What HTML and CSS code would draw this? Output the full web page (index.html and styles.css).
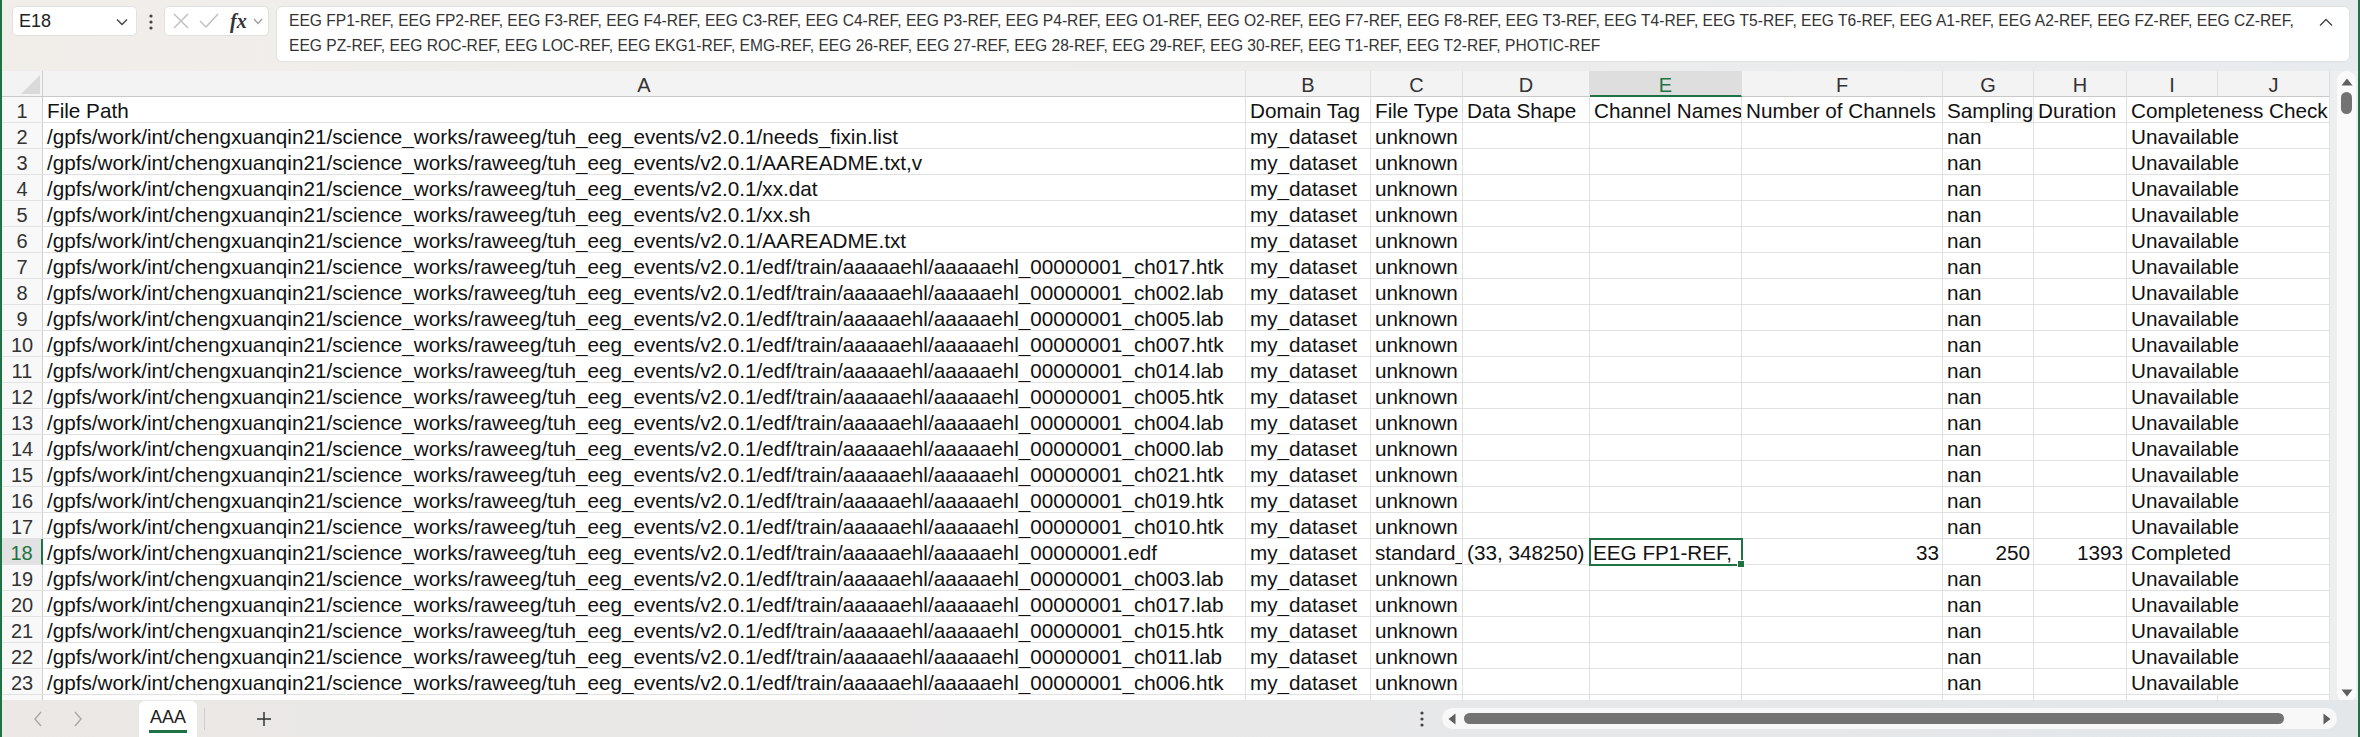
FILE: index.html
```html
<!DOCTYPE html>
<html>
<head>
<meta charset="utf-8">
<link rel="stylesheet" href="styles.css">
</head>
<body>
<div class="app">
  <div class="toolbar">
    <div class="namebox"><span>E18</span><svg class="chev" width="12" height="8" viewBox="0 0 12 8"><path d="M1 1.5 L6 6.5 L11 1.5" fill="none" stroke="#444" stroke-width="1.4"/></svg></div>
    <svg class="kebab" width="4" height="16" viewBox="0 0 4 16"><circle cx="2" cy="2" r="1.6" fill="#444"/><circle cx="2" cy="8" r="1.6" fill="#444"/><circle cx="2" cy="14" r="1.6" fill="#444"/></svg>
    <div class="fxbox">
      <svg width="18" height="18" viewBox="0 0 18 18"><path d="M2 2 L16 16 M16 2 L2 16" stroke="#bdbdbd" stroke-width="1.4"/></svg>
      <svg width="20" height="16" viewBox="0 0 20 16"><path d="M1 8 L7 14 L19 1" fill="none" stroke="#bdbdbd" stroke-width="1.4"/></svg>
      <span class="fx">fx</span>
      <svg class="fxchev" width="10" height="7" viewBox="0 0 10 7"><path d="M1 1 L5 5.5 L9 1" fill="none" stroke="#9a9a9a" stroke-width="1.2"/></svg>
    </div>
    <div class="formula">
      <div class="ftext">EEG FP1-REF, EEG FP2-REF, EEG F3-REF, EEG F4-REF, EEG C3-REF, EEG C4-REF, EEG P3-REF, EEG P4-REF, EEG O1-REF, EEG O2-REF, EEG F7-REF, EEG F8-REF, EEG T3-REF, EEG T4-REF, EEG T5-REF, EEG T6-REF, EEG A1-REF, EEG A2-REF, EEG FZ-REF, EEG CZ-REF,<br>EEG PZ-REF, EEG ROC-REF, EEG LOC-REF, EEG EKG1-REF, EMG-REF, EEG 26-REF, EEG 27-REF, EEG 28-REF, EEG 29-REF, EEG 30-REF, EEG T1-REF, EEG T2-REF, PHOTIC-REF</div>
      <svg class="upchev" width="14" height="9" viewBox="0 0 14 9"><path d="M1 7.5 L7 1.5 L13 7.5" fill="none" stroke="#444" stroke-width="1.4"/></svg>
    </div>
  </div>

  <div class="main">
    <div class="grid">
      <div class="corner"><svg width="19" height="19" viewBox="0 0 19 19"><path d="M19 0 L19 19 L0 19 Z" fill="#dadada"/></svg></div>
      <div class="ch">A</div><div class="ch">B</div><div class="ch">C</div><div class="ch">D</div><div class="ch sel">E</div><div class="ch">F</div><div class="ch">G</div><div class="ch">H</div><div class="ch">I</div><div class="ch">J</div>

      <div class="rh">1</div><div class="c">File Path</div><div class="c">Domain Tag</div><div class="c">File Type</div><div class="c">Data Shape</div><div class="c">Channel Names</div><div class="c">Number of Channels</div><div class="c">Sampling</div><div class="c">Duration</div><div class="c ov">Completeness Check</div><div class="c"></div>

      <div class="rh">2</div><div class="c">/gpfs/work/int/chengxuanqin21/science_works/raweeg/tuh_eeg_events/v2.0.1/needs_fixin.list</div><div class="c">my_dataset</div><div class="c">unknown</div><div class="c"></div><div class="c"></div><div class="c"></div><div class="c">nan</div><div class="c"></div><div class="c ov">Unavailable</div><div class="c"></div>
      <div class="rh">3</div><div class="c">/gpfs/work/int/chengxuanqin21/science_works/raweeg/tuh_eeg_events/v2.0.1/AAREADME.txt,v</div><div class="c">my_dataset</div><div class="c">unknown</div><div class="c"></div><div class="c"></div><div class="c"></div><div class="c">nan</div><div class="c"></div><div class="c ov">Unavailable</div><div class="c"></div>
      <div class="rh">4</div><div class="c">/gpfs/work/int/chengxuanqin21/science_works/raweeg/tuh_eeg_events/v2.0.1/xx.dat</div><div class="c">my_dataset</div><div class="c">unknown</div><div class="c"></div><div class="c"></div><div class="c"></div><div class="c">nan</div><div class="c"></div><div class="c ov">Unavailable</div><div class="c"></div>
      <div class="rh">5</div><div class="c">/gpfs/work/int/chengxuanqin21/science_works/raweeg/tuh_eeg_events/v2.0.1/xx.sh</div><div class="c">my_dataset</div><div class="c">unknown</div><div class="c"></div><div class="c"></div><div class="c"></div><div class="c">nan</div><div class="c"></div><div class="c ov">Unavailable</div><div class="c"></div>
      <div class="rh">6</div><div class="c">/gpfs/work/int/chengxuanqin21/science_works/raweeg/tuh_eeg_events/v2.0.1/AAREADME.txt</div><div class="c">my_dataset</div><div class="c">unknown</div><div class="c"></div><div class="c"></div><div class="c"></div><div class="c">nan</div><div class="c"></div><div class="c ov">Unavailable</div><div class="c"></div>
      <div class="rh">7</div><div class="c">/gpfs/work/int/chengxuanqin21/science_works/raweeg/tuh_eeg_events/v2.0.1/edf/train/aaaaaehl/aaaaaehl_00000001_ch017.htk</div><div class="c">my_dataset</div><div class="c">unknown</div><div class="c"></div><div class="c"></div><div class="c"></div><div class="c">nan</div><div class="c"></div><div class="c ov">Unavailable</div><div class="c"></div>
      <div class="rh">8</div><div class="c">/gpfs/work/int/chengxuanqin21/science_works/raweeg/tuh_eeg_events/v2.0.1/edf/train/aaaaaehl/aaaaaehl_00000001_ch002.lab</div><div class="c">my_dataset</div><div class="c">unknown</div><div class="c"></div><div class="c"></div><div class="c"></div><div class="c">nan</div><div class="c"></div><div class="c ov">Unavailable</div><div class="c"></div>
      <div class="rh">9</div><div class="c">/gpfs/work/int/chengxuanqin21/science_works/raweeg/tuh_eeg_events/v2.0.1/edf/train/aaaaaehl/aaaaaehl_00000001_ch005.lab</div><div class="c">my_dataset</div><div class="c">unknown</div><div class="c"></div><div class="c"></div><div class="c"></div><div class="c">nan</div><div class="c"></div><div class="c ov">Unavailable</div><div class="c"></div>
      <div class="rh">10</div><div class="c">/gpfs/work/int/chengxuanqin21/science_works/raweeg/tuh_eeg_events/v2.0.1/edf/train/aaaaaehl/aaaaaehl_00000001_ch007.htk</div><div class="c">my_dataset</div><div class="c">unknown</div><div class="c"></div><div class="c"></div><div class="c"></div><div class="c">nan</div><div class="c"></div><div class="c ov">Unavailable</div><div class="c"></div>
      <div class="rh">11</div><div class="c">/gpfs/work/int/chengxuanqin21/science_works/raweeg/tuh_eeg_events/v2.0.1/edf/train/aaaaaehl/aaaaaehl_00000001_ch014.lab</div><div class="c">my_dataset</div><div class="c">unknown</div><div class="c"></div><div class="c"></div><div class="c"></div><div class="c">nan</div><div class="c"></div><div class="c ov">Unavailable</div><div class="c"></div>
      <div class="rh">12</div><div class="c">/gpfs/work/int/chengxuanqin21/science_works/raweeg/tuh_eeg_events/v2.0.1/edf/train/aaaaaehl/aaaaaehl_00000001_ch005.htk</div><div class="c">my_dataset</div><div class="c">unknown</div><div class="c"></div><div class="c"></div><div class="c"></div><div class="c">nan</div><div class="c"></div><div class="c ov">Unavailable</div><div class="c"></div>
      <div class="rh">13</div><div class="c">/gpfs/work/int/chengxuanqin21/science_works/raweeg/tuh_eeg_events/v2.0.1/edf/train/aaaaaehl/aaaaaehl_00000001_ch004.lab</div><div class="c">my_dataset</div><div class="c">unknown</div><div class="c"></div><div class="c"></div><div class="c"></div><div class="c">nan</div><div class="c"></div><div class="c ov">Unavailable</div><div class="c"></div>
      <div class="rh">14</div><div class="c">/gpfs/work/int/chengxuanqin21/science_works/raweeg/tuh_eeg_events/v2.0.1/edf/train/aaaaaehl/aaaaaehl_00000001_ch000.lab</div><div class="c">my_dataset</div><div class="c">unknown</div><div class="c"></div><div class="c"></div><div class="c"></div><div class="c">nan</div><div class="c"></div><div class="c ov">Unavailable</div><div class="c"></div>
      <div class="rh">15</div><div class="c">/gpfs/work/int/chengxuanqin21/science_works/raweeg/tuh_eeg_events/v2.0.1/edf/train/aaaaaehl/aaaaaehl_00000001_ch021.htk</div><div class="c">my_dataset</div><div class="c">unknown</div><div class="c"></div><div class="c"></div><div class="c"></div><div class="c">nan</div><div class="c"></div><div class="c ov">Unavailable</div><div class="c"></div>
      <div class="rh">16</div><div class="c">/gpfs/work/int/chengxuanqin21/science_works/raweeg/tuh_eeg_events/v2.0.1/edf/train/aaaaaehl/aaaaaehl_00000001_ch019.htk</div><div class="c">my_dataset</div><div class="c">unknown</div><div class="c"></div><div class="c"></div><div class="c"></div><div class="c">nan</div><div class="c"></div><div class="c ov">Unavailable</div><div class="c"></div>
      <div class="rh">17</div><div class="c">/gpfs/work/int/chengxuanqin21/science_works/raweeg/tuh_eeg_events/v2.0.1/edf/train/aaaaaehl/aaaaaehl_00000001_ch010.htk</div><div class="c">my_dataset</div><div class="c">unknown</div><div class="c"></div><div class="c"></div><div class="c"></div><div class="c">nan</div><div class="c"></div><div class="c ov">Unavailable</div><div class="c"></div>
      <div class="rh rsel">18</div><div class="c">/gpfs/work/int/chengxuanqin21/science_works/raweeg/tuh_eeg_events/v2.0.1/edf/train/aaaaaehl/aaaaaehl_00000001.edf</div><div class="c">my_dataset</div><div class="c">standard_edf</div><div class="c">(33, 348250)</div><div class="c active"><span class="clip">EEG FP1-REF, EEG FP2-REF</span><span class="handle"></span></div><div class="c r">33</div><div class="c r">250</div><div class="c r">1393</div><div class="c ov">Completed</div><div class="c"></div>
      <div class="rh">19</div><div class="c">/gpfs/work/int/chengxuanqin21/science_works/raweeg/tuh_eeg_events/v2.0.1/edf/train/aaaaaehl/aaaaaehl_00000001_ch003.lab</div><div class="c">my_dataset</div><div class="c">unknown</div><div class="c"></div><div class="c"></div><div class="c"></div><div class="c">nan</div><div class="c"></div><div class="c ov">Unavailable</div><div class="c"></div>
      <div class="rh">20</div><div class="c">/gpfs/work/int/chengxuanqin21/science_works/raweeg/tuh_eeg_events/v2.0.1/edf/train/aaaaaehl/aaaaaehl_00000001_ch017.lab</div><div class="c">my_dataset</div><div class="c">unknown</div><div class="c"></div><div class="c"></div><div class="c"></div><div class="c">nan</div><div class="c"></div><div class="c ov">Unavailable</div><div class="c"></div>
      <div class="rh">21</div><div class="c">/gpfs/work/int/chengxuanqin21/science_works/raweeg/tuh_eeg_events/v2.0.1/edf/train/aaaaaehl/aaaaaehl_00000001_ch015.htk</div><div class="c">my_dataset</div><div class="c">unknown</div><div class="c"></div><div class="c"></div><div class="c"></div><div class="c">nan</div><div class="c"></div><div class="c ov">Unavailable</div><div class="c"></div>
      <div class="rh">22</div><div class="c">/gpfs/work/int/chengxuanqin21/science_works/raweeg/tuh_eeg_events/v2.0.1/edf/train/aaaaaehl/aaaaaehl_00000001_ch011.lab</div><div class="c">my_dataset</div><div class="c">unknown</div><div class="c"></div><div class="c"></div><div class="c"></div><div class="c">nan</div><div class="c"></div><div class="c ov">Unavailable</div><div class="c"></div>
      <div class="rh">23</div><div class="c">/gpfs/work/int/chengxuanqin21/science_works/raweeg/tuh_eeg_events/v2.0.1/edf/train/aaaaaehl/aaaaaehl_00000001_ch006.htk</div><div class="c">my_dataset</div><div class="c">unknown</div><div class="c"></div><div class="c"></div><div class="c"></div><div class="c">nan</div><div class="c"></div><div class="c ov">Unavailable</div><div class="c"></div>
      <div class="rh"></div><div class="c"></div><div class="c"></div><div class="c"></div><div class="c"></div><div class="c"></div><div class="c"></div><div class="c"></div><div class="c"></div><div class="c"></div><div class="c"></div>
    </div>
    <div class="vscroll">
      <div class="vtrack">
        <svg width="12" height="8" viewBox="0 0 12 8"><path d="M6 0.5 L11.5 7.5 L0.5 7.5 Z" fill="#5f5f5f"/></svg>
        <div class="vthumb"></div>
        <div class="vspace"></div>
        <svg width="12" height="8" viewBox="0 0 12 8"><path d="M0.5 0.5 L11.5 0.5 L6 7.5 Z" fill="#5f5f5f"/></svg>
      </div>
    </div>
  </div>

  <div class="bottombar">
    <svg class="nav prev" width="10" height="16" viewBox="0 0 10 16"><path d="M8 1 L2 8 L8 15" fill="none" stroke="#a8a8a8" stroke-width="1.4"/></svg>
    <svg class="nav next" width="10" height="16" viewBox="0 0 10 16"><path d="M2 1 L8 8 L2 15" fill="none" stroke="#a8a8a8" stroke-width="1.4"/></svg>
    <div class="tab"><span>AAA</span></div>
    <div class="tabsep"></div>
    <svg class="add" width="16" height="16" viewBox="0 0 16 16"><path d="M8 1 V15 M1 8 H15" stroke="#333" stroke-width="1.5"/></svg>
    <div class="spacer"></div>
    <svg class="bdots" width="4" height="16" viewBox="0 0 4 16"><circle cx="2" cy="2" r="1.6" fill="#444"/><circle cx="2" cy="8" r="1.6" fill="#444"/><circle cx="2" cy="14" r="1.6" fill="#444"/></svg>
    <div class="htrack">
      <svg width="8" height="12" viewBox="0 0 8 12"><path d="M7.5 0.5 L7.5 11.5 L0.5 6 Z" fill="#5f5f5f"/></svg>
      <div class="hthumb"></div>
      <svg width="8" height="12" viewBox="0 0 8 12"><path d="M0.5 0.5 L0.5 11.5 L7.5 6 Z" fill="#5f5f5f"/></svg>
    </div>
  </div>
</div>
</body>
</html>
```
FILE: styles.css
```css
html, body {
  margin: 0;
  padding: 0;
}
body {
  width: 2360px;
  height: 737px;
  overflow: hidden;
  font-family: "Liberation Sans", Arial, sans-serif;
}
.app {
  width: 2360px;
  height: 737px;
  box-sizing: border-box;
  border-left: 2px solid #1f7244;
  border-right: 2px solid #1f7244;
  display: flex;
  flex-direction: column;
  background: #fff;
}

/* ---------- formula bar ---------- */
.toolbar {
  height: 71px;
  flex: none;
  display: flex;
  align-items: flex-start;
  padding-top: 6px;
  box-sizing: border-box;
  background: linear-gradient(90deg, #f1eeea 0%, #eeedeb 45%, #e8ebee 100%);
}
.namebox {
  flex: none;
  margin-left: 10px;
  width: 125px;
  height: 30px;
  box-sizing: border-box;
  background: #fff;
  border: 1px solid #e1e1e1;
  border-radius: 5px;
  display: flex;
  align-items: center;
  justify-content: space-between;
  padding: 0 8px 0 6px;
  font-size: 18px;
  color: #222;
}
.namebox .chev { margin-top: 2px; }
.kebab {
  flex: none;
  margin-left: 12px;
  margin-top: 8px;
}
.fxbox {
  flex: none;
  margin-left: 11px;
  width: 105px;
  height: 30px;
  box-sizing: border-box;
  background: #fff;
  border: 1px solid #e1e1e1;
  border-radius: 5px;
  display: flex;
  align-items: center;
  padding-left: 7px;
  gap: 9px;
}
.fxbox .fx {
  font-family: "Liberation Serif", "Times New Roman", serif;
  font-style: italic;
  font-weight: bold;
  font-size: 20px;
  color: #333;
  margin-left: 2px;
  margin-right: -3px;
}
.formula {
  margin-left: 7px;
  margin-right: 8px;
  flex: 1;
  min-width: 0;
  overflow: hidden;
  height: 56px;
  box-sizing: border-box;
  background: #fff;
  border: 1px solid #e1e1e1;
  border-radius: 6px;
  display: flex;
  align-items: flex-start;
  justify-content: space-between;
  padding: 1px 16px 0 12px;
}
.ftext {
  font-size: 15.6px;
  line-height: 25px;
  color: #333;
  white-space: nowrap;
  min-width: 0;
  overflow: hidden;
}
.upchev { flex: none; margin-top: 10px; }

/* ---------- sheet ---------- */
.main {
  height: 629px;
  flex: none;
  display: flex;
}
.grid {
  display: grid;
  grid-template-columns: 41px 1203px 125px 92px 127px 152px 201px 91px 93px 91px 112px;
  grid-auto-rows: 26px;
  height: 629px;
  overflow: hidden;
  background: #fff;
  font-size: 20.7px;
  color: #111;
}
.corner {
  background: #f3f3f3;
  border-right: 1px solid #cfcfcf;
  border-bottom: 1px solid #c9c9c9;
  box-sizing: border-box;
  display: flex;
  align-items: flex-end;
  justify-content: flex-end;
  padding: 0 2px 2px 0;
}
.ch {
  background: #f3f3f3;
  border-right: 1px solid #dedede;
  border-bottom: 1px solid #c9c9c9;
  box-sizing: border-box;
  text-align: center;
  line-height: 28px;
  font-size: 20px;
  color: #333;
  overflow: hidden;
}
.ch.sel {
  background: #dedede;
  color: #1f7244;
  border-bottom: 2px solid #1f7244;
}
.rh {
  background: #f8f8f8;
  border-right: 1px solid #cfcfcf;
  border-bottom: 1px solid #e3e3e3;
  box-sizing: border-box;
  text-align: center;
  line-height: 28px;
  font-size: 20px;
  color: #333;
  overflow: hidden;
}
.rh.rsel {
  background: #e2e2e2;
  color: #1f7244;
  border-right: 2px solid #1f7244;
}
.c {
  border-right: 1px solid #e1e1e1;
  border-bottom: 1px solid #e1e1e1;
  box-sizing: border-box;
  padding: 0 3px 0 4px;
  line-height: 28px;
  height: 26px;
  white-space: nowrap;
  overflow: hidden;
}
.c.r { text-align: right; }
.c.ov {
  overflow: visible;
  border-right-color: transparent;
}
.c.active {
  position: relative;
  overflow: visible;
  outline: 2px solid #1f7244;
  outline-offset: -1px;
  z-index: 2;
  padding: 0 0 0 3px;
}
.clip {
  display: block;
  overflow: hidden;
  height: 25px;
  margin-right: 2px;
}
.handle {
  position: absolute;
  right: -4px;
  bottom: -4px;
  width: 6px;
  height: 6px;
  background: #1f7244;
  border: 1px solid #fff;
}

/* ---------- vertical scrollbar ---------- */
.vscroll {
  width: 28px;
  flex: none;
  background: #eceef0;
  display: flex;
  justify-content: flex-end;
  padding-right: 2px;
  box-sizing: border-box;
}
.vtrack {
  width: 19px;
  height: 632px;
  background: #fafafa;
  border-radius: 10px;
  display: flex;
  flex-direction: column;
  align-items: center;
  padding: 7px 0 6px;
  box-sizing: border-box;
}
.vthumb {
  margin-top: 6px;
  width: 11px;
  height: 22px;
  border-radius: 6px;
  background: #737373;
}
.vspace { flex: 1; }

/* ---------- bottom bar ---------- */
.bottombar {
  height: 37px;
  flex: none;
  display: flex;
  align-items: center;
  background: linear-gradient(90deg, #ebe8e5 0%, #e8e8e8 50%, #e3e7ea 100%);
  position: relative;
  z-index: 3;
}
.nav.prev { margin-left: 31px; }
.nav.next { margin-left: 30px; }
.tab {
  margin-left: 56px;
  align-self: flex-end;
  width: 58px;
  height: 36px;
  background: #fff;
  border-radius: 6px 6px 0 0;
  display: flex;
  justify-content: center;
  box-sizing: border-box;
  padding-top: 6px;
}
.tab span {
  font-size: 18px;
  line-height: 21px;
  height: 23px;
  color: #222;
  border-bottom: 3px solid #1f7244;
  padding: 0 1px;
}
.tabsep {
  margin-left: 7px;
  width: 1px;
  height: 22px;
  background: #cfcfcf;
}
.add { margin-left: 51px; }
.spacer { flex: 1; }
.bdots { margin-right: 18px; }
.htrack {
  width: 895px;
  height: 21px;
  margin-right: 21px;
  background: #f8f8f8;
  border-radius: 11px;
  display: flex;
  align-items: center;
  padding: 0 6px;
  box-sizing: border-box;
}
.hthumb {
  margin-left: 8px;
  width: 820px;
  height: 11px;
  border-radius: 6px;
  background: #737373;
  margin-right: auto;
}
```
